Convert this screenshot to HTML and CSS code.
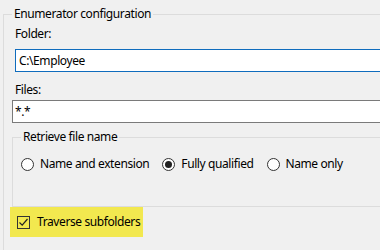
FILE: index.html
```html
<!DOCTYPE html>
<html lang="en">
<head>
    <meta charset="UTF-8">
    <title>Enumerator configuration</title>
    <link rel="stylesheet" href="styles.css">
</head>
<body>
    <fieldset class="group outer">
        <legend>Enumerator configuration</legend>

        <label class="field-label folder-label" for="folder">Folder:</label>
        <input class="text focused" type="text" id="folder" value="C:\Employee">

        <label class="field-label files-label" for="files">Files:</label>
        <input class="text files" type="text" id="files" value="*.*">

        <fieldset class="group inner">
            <legend>Retrieve file name</legend>
            <div class="radios">
                <label class="radio"><span class="dot"></span>Name and extension</label>
                <label class="radio"><span class="dot checked"></span>Fully qualified</label>
                <label class="radio"><span class="dot"></span>Name only</label>
            </div>
        </fieldset>

        <label class="check">
            <span class="box">
                <svg width="11" height="11" viewBox="0 0 11 11"><path d="M1.5 5.5 L4.2 8.2 L9.5 2" fill="none" stroke="#222" stroke-width="1.2"/></svg>
            </span>
            Traverse subfolders
        </label>
    </fieldset>
</body>
</html>
```

FILE: styles.css
```css
html {
    overflow: hidden;
}
body {
    margin: 0;
    background-color: #f0f0f0;
    font-family: "Noto Sans", Arial, sans-serif;
    font-size: 12px;
    line-height: 16px;
    letter-spacing: -0.4px;
    color: #000;
}
.group {
    border: 1px solid #dcdcdc;
    margin: 0;
    padding: 0;
    min-width: 0;
}
.group legend {
    padding: 0 2px;
    line-height: 16px;
}
.outer {
    margin: 6px 0 0 3px;
    width: 420px;
    height: 300px;
    padding-left: 8px;
}
.field-label {
    display: block;
    margin-left: 3px;
}
.folder-label {
    margin-top: 4px;
}
.files-label {
    margin-top: 10px;
}
.text {
    display: block;
    box-sizing: border-box;
    width: 420px;
    height: 23px;
    margin: 0;
    padding: 0 2px;
    border: 1px solid #7a7a7a;
    background: #fff;
    font: inherit;
    letter-spacing: inherit;
    color: #000;
    outline: none;
}
.focused {
    margin: 7px 0 0 3px;
    border-color: #0f6cbd;
    padding-left: 3px;
}
.files {
    margin-top: 2px;
}
.inner {
    margin-top: 6px;
    width: 420px;
    height: 76px;
    padding: 0 0 0 8px;
}
.radios {
    display: flex;
    gap: 13px;
    margin-top: 11px;
}
.radio {
    display: flex;
    align-items: center;
    gap: 6px;
}
.dot {
    box-sizing: border-box;
    width: 13px;
    height: 13px;
    border: 1px solid #333;
    border-radius: 50%;
    background: #fff;
    display: flex;
    align-items: center;
    justify-content: center;
}
.dot.checked::after {
    content: "";
    width: 7px;
    height: 7px;
    border-radius: 50%;
    background: #222;
}
.check {
    display: inline-flex;
    align-items: center;
    gap: 7px;
    margin: 0 0 0 -2px;
    padding: 7px 3px 7px 7px;
    background: #f2e84f;
}
.box {
    box-sizing: border-box;
    width: 13px;
    height: 13px;
    border: 1px solid #333;
    display: flex;
    align-items: center;
    justify-content: center;
}
```
